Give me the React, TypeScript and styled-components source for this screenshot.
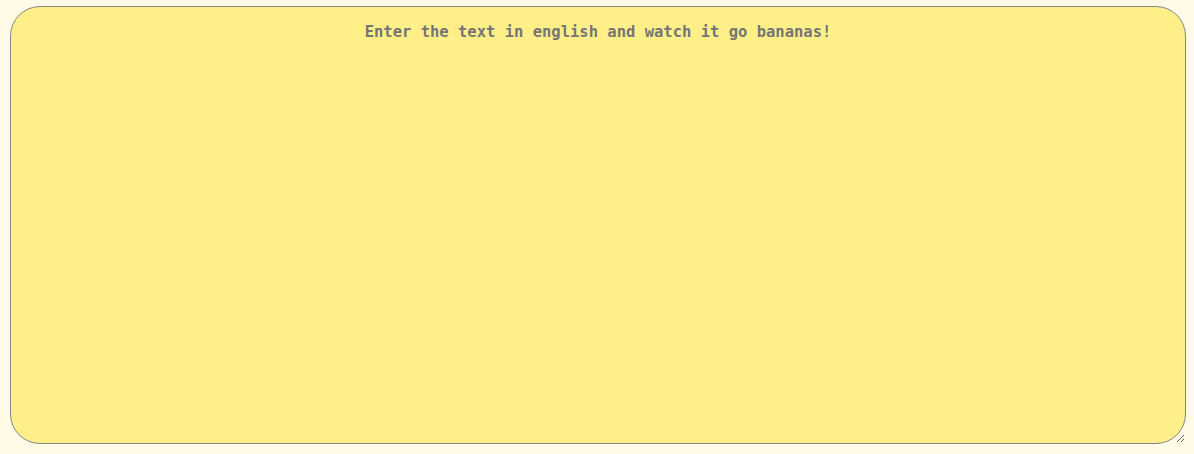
import React from "react";
import styled, { createGlobalStyle } from "styled-components";

const Global = createGlobalStyle`
  html, body {
    margin: 0;
    padding: 0;
    background: #fffbe7;
  }
  #root {
    height: 454px;
  }
`;

const Page = styled.main`
  box-sizing: border-box;
  height: 454px;
  padding: 6px 8px 10px 10px;
  display: flex;
`;

const Editor = styled.textarea`
  box-sizing: border-box;
  flex: 1;
  height: 100%;
  margin: 0;
  padding: 15px 16px;
  background: #feef89;
  border: 1px solid #858585;
  border-radius: 30px;
  font-family: "DejaVu Sans Mono", monospace;
  font-weight: bold;
  font-size: 15.5px;
  line-height: 20px;
  text-align: center;
  color: #555;
  outline: none;
  &::placeholder {
    color: #757575;
    opacity: 1;
  }
`;

export default function App() {
  return (
    <>
      <Global />
      <Page>
        <Editor placeholder="Enter the text in english and watch it go bananas!" />
      </Page>
    </>
  );
}
